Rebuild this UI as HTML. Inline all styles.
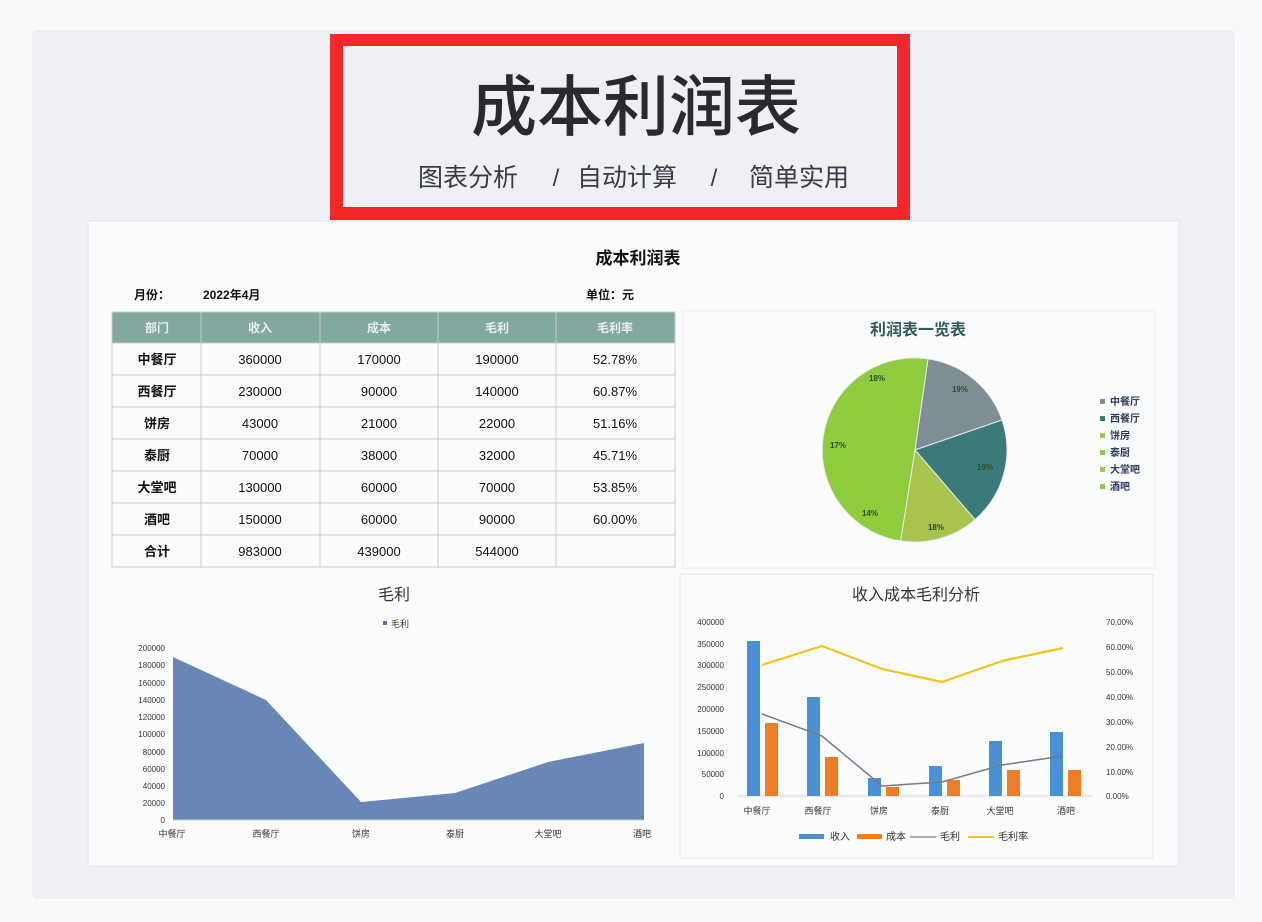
<!DOCTYPE html>
<html><head><meta charset="utf-8"><style>
html,body{margin:0;padding:0;background:#f7f8fa;}
svg{display:block;font-family:"Liberation Sans","Noto Sans CJK SC",sans-serif;}
</style></head><body>
<svg width="1262" height="922" viewBox="0 0 1262 922" xmlns="http://www.w3.org/2000/svg">
<rect x="0" y="0" width="1262" height="922" fill="#f8f9fb"/>
<rect x="33" y="31" width="1201" height="867" rx="4" fill="#eef0f4" stroke="#e6e8ec"/>
<!-- red title box -->
<rect x="330" y="34" width="580" height="186" fill="#f3262a"/>
<rect x="343" y="46" width="554" height="161" fill="#eef0f4"/>
<text x="636" y="130" text-anchor="middle" font-size="66" fill="#2a2a2e" font-family="'Noto Sans CJK SC',sans-serif" font-weight="500">成本利润表</text>
<text x="468" y="186" text-anchor="middle" font-size="25" fill="#3a3a48" font-family="'Noto Sans CJK SC',sans-serif">图表分析</text>
<text x="556" y="186" text-anchor="middle" font-size="24" fill="#3a3a48">/</text>
<text x="627" y="186" text-anchor="middle" font-size="25" fill="#3a3a48" font-family="'Noto Sans CJK SC',sans-serif">自动计算</text>
<text x="714" y="186" text-anchor="middle" font-size="24" fill="#3a3a48">/</text>
<text x="799" y="186" text-anchor="middle" font-size="25" fill="#3a3a48" font-family="'Noto Sans CJK SC',sans-serif">简单实用</text>
<!-- card -->
<rect x="88" y="221" width="1091" height="645" fill="#fbfcfd" stroke="#e2e4e8"/>
<text x="638" y="264" text-anchor="middle" font-size="17" font-weight="bold" fill="#111">成本利润表</text>
<text x="134" y="299" font-size="12" font-weight="bold" fill="#111">月份：</text>
<text x="203" y="299" font-size="12" font-weight="bold" fill="#111">2022年4月</text>
<text x="586" y="299" font-size="12" font-weight="bold" fill="#111">单位：元</text>
<!-- table -->
<rect x="112" y="312" width="563" height="31" fill="#82a8a0"/>
<g font-size="12" font-weight="bold" fill="#e8f0ee" text-anchor="middle">
<text x="157" y="332">部门</text><text x="260" y="332">收入</text><text x="379" y="332">成本</text><text x="497" y="332">毛利</text><text x="615" y="332">毛利率</text>
</g>
<g stroke="#c8ccd0" stroke-width="1" fill="none">
<rect x="112" y="312" width="563" height="255"/>
<line x1="112" y1="343" x2="675" y2="343"/><line x1="112" y1="375" x2="675" y2="375"/><line x1="112" y1="407" x2="675" y2="407"/><line x1="112" y1="439" x2="675" y2="439"/><line x1="112" y1="471" x2="675" y2="471"/><line x1="112" y1="503" x2="675" y2="503"/><line x1="112" y1="535" x2="675" y2="535"/>
<line x1="201" y1="312" x2="201" y2="567"/><line x1="320" y1="312" x2="320" y2="567"/><line x1="438" y1="312" x2="438" y2="567"/><line x1="556" y1="312" x2="556" y2="567"/>
</g>
<g font-size="13" fill="#111" text-anchor="middle">
<g font-weight="bold"><text x="157" y="364">中餐厅</text><text x="157" y="396">西餐厅</text><text x="157" y="428">饼房</text><text x="157" y="460">泰厨</text><text x="157" y="492">大堂吧</text><text x="157" y="524">酒吧</text><text x="157" y="556">合计</text></g>
<text x="260" y="364">360000</text><text x="379" y="364">170000</text><text x="497" y="364">190000</text><text x="615" y="364">52.78%</text>
<text x="260" y="396">230000</text><text x="379" y="396">90000</text><text x="497" y="396">140000</text><text x="615" y="396">60.87%</text>
<text x="260" y="428">43000</text><text x="379" y="428">21000</text><text x="497" y="428">22000</text><text x="615" y="428">51.16%</text>
<text x="260" y="460">70000</text><text x="379" y="460">38000</text><text x="497" y="460">32000</text><text x="615" y="460">45.71%</text>
<text x="260" y="492">130000</text><text x="379" y="492">60000</text><text x="497" y="492">70000</text><text x="615" y="492">53.85%</text>
<text x="260" y="524">150000</text><text x="379" y="524">60000</text><text x="497" y="524">90000</text><text x="615" y="524">60.00%</text>
<text x="260" y="556">983000</text><text x="379" y="556">439000</text><text x="497" y="556">544000</text>
</g>
<!-- pie panel -->
<rect x="683" y="311" width="472" height="257" fill="#fbfcfd" stroke="#eceef0"/>
<text x="918" y="335" text-anchor="middle" font-size="16" font-weight="bold" fill="#2f5a5a">利润表一览表</text>
<g stroke="#e8ecef" stroke-width="1">
<path d="M915,450 L928,358.9 A92,92 0 0,1 1002,420 Z" fill="#7f8d96"/>
<path d="M915,450 L1002,420 A92,92 0 0,1 975,519.6 Z" fill="#3a7a78"/>
<path d="M915,450 L975,519.6 A92,92 0 0,1 900.6,540.9 Z" fill="#a7c54c"/>
<path d="M915,450 L900.6,540.9 A92,92 0 1,1 928,358.9 Z" fill="#8ecb3d"/>
</g>
<g font-size="8" font-weight="bold" fill="#2f4a2a" text-anchor="middle">
<text x="960" y="392">19%</text><text x="985" y="470">19%</text><text x="936" y="530">18%</text><text x="870" y="516">14%</text><text x="838" y="448">17%</text><text x="877" y="381">18%</text>
</g>
<g font-size="10" font-weight="bold" fill="#2a3a5a">
<rect x="1100" y="399" width="5" height="5" fill="#7f8d96"/><text x="1110" y="405">中餐厅</text>
<rect x="1100" y="416" width="5" height="5" fill="#3a7a78"/><text x="1110" y="422">西餐厅</text>
<rect x="1100" y="433" width="5" height="5" fill="#a7c54c"/><text x="1110" y="439">饼房</text>
<rect x="1100" y="450" width="5" height="5" fill="#8ecb3d"/><text x="1110" y="456">泰厨</text>
<rect x="1100" y="467" width="5" height="5" fill="#a7c54c"/><text x="1110" y="473">大堂吧</text>
<rect x="1100" y="484" width="5" height="5" fill="#8ecb3d"/><text x="1110" y="490">酒吧</text>
</g>
<!-- area chart -->
<text x="394" y="600" text-anchor="middle" font-size="16" fill="#333">毛利</text>
<rect x="383" y="621" width="4" height="4" fill="#5a78aa"/><text x="391" y="627" font-size="9" fill="#333">毛利</text>
<path d="M173,820 L173,657 L266,700 L361,802 L455,793 L548,762 L644,743 L644,820 Z" fill="#6887b6"/>
<line x1="173" y1="820" x2="644" y2="820" stroke="#c8ccd4"/>
<g font-size="8" fill="#333" text-anchor="end">
<text x="165" y="651">200000</text><text x="165" y="668">180000</text><text x="165" y="686">160000</text><text x="165" y="703">140000</text><text x="165" y="720">120000</text><text x="165" y="737">100000</text><text x="165" y="755">80000</text><text x="165" y="772">60000</text><text x="165" y="789">40000</text><text x="165" y="806">20000</text><text x="165" y="823">0</text>
</g>
<g font-size="9" fill="#333" text-anchor="middle">
<text x="172" y="837">中餐厅</text><text x="266" y="837">西餐厅</text><text x="361" y="837">饼房</text><text x="455" y="837">泰厨</text><text x="548" y="837">大堂吧</text><text x="642" y="837">酒吧</text>
</g>
<!-- combo chart -->
<rect x="680" y="574" width="473" height="284" fill="#fbfcfd" stroke="#e6e8ec"/>
<text x="916" y="600" text-anchor="middle" font-size="16" fill="#333">收入成本毛利分析</text>
<g font-size="8" fill="#333" text-anchor="end">
<text x="724" y="625">400000</text><text x="724" y="647">350000</text><text x="724" y="668">300000</text><text x="724" y="690">250000</text><text x="724" y="712">200000</text><text x="724" y="734">150000</text><text x="724" y="756">100000</text><text x="724" y="777">50000</text><text x="724" y="799">0</text>
</g>
<g font-size="8" fill="#333">
<text x="1106" y="625">70.00%</text><text x="1106" y="650">60.00%</text><text x="1106" y="675">50.00%</text><text x="1106" y="700">40.00%</text><text x="1106" y="725">30.00%</text><text x="1106" y="750">20.00%</text><text x="1106" y="775">10.00%</text><text x="1106" y="799">0.00%</text>
</g>
<line x1="737" y1="796" x2="1092" y2="796" stroke="#d0d4d8"/>
<g fill="#4a90d6">
<rect x="747" y="641" width="13" height="155"/><rect x="807" y="697" width="13" height="99"/><rect x="868" y="778" width="13" height="18"/><rect x="929" y="766" width="13" height="30"/><rect x="989" y="741" width="13" height="55"/><rect x="1050" y="732" width="13" height="64"/>
</g>
<g fill="#ee7d24">
<rect x="765" y="723" width="13" height="73"/><rect x="825" y="757" width="13" height="39"/><rect x="886" y="787" width="13" height="9"/><rect x="947" y="780" width="13" height="16"/><rect x="1007" y="770" width="13" height="26"/><rect x="1068" y="770" width="13" height="26"/>
</g>
<polyline points="762,714 822,736 882,786 942,782 1002,765 1063,756" fill="none" stroke="#7a7a80" stroke-width="1.5"/>
<polyline points="762,665 822,646 882,669 942,682 1002,661 1063,648" fill="none" stroke="#f2c318" stroke-width="2.2"/>
<g font-size="9" fill="#333" text-anchor="middle">
<text x="757" y="814">中餐厅</text><text x="818" y="814">西餐厅</text><text x="879" y="814">饼房</text><text x="940" y="814">泰厨</text><text x="1000" y="814">大堂吧</text><text x="1066" y="814">酒吧</text>
</g>
<g font-size="10" fill="#333">
<rect x="799" y="834" width="25" height="5" fill="#4a90d6"/><text x="830" y="840">收入</text>
<rect x="857" y="834" width="25" height="5" fill="#ee7d24"/><text x="886" y="840">成本</text>
<line x1="910" y1="837" x2="936" y2="837" stroke="#555"/><text x="940" y="840">毛利</text>
<line x1="968" y1="837" x2="994" y2="837" stroke="#f2c318" stroke-width="2"/><text x="998" y="840">毛利率</text>
</g>
</svg>
</body></html>
